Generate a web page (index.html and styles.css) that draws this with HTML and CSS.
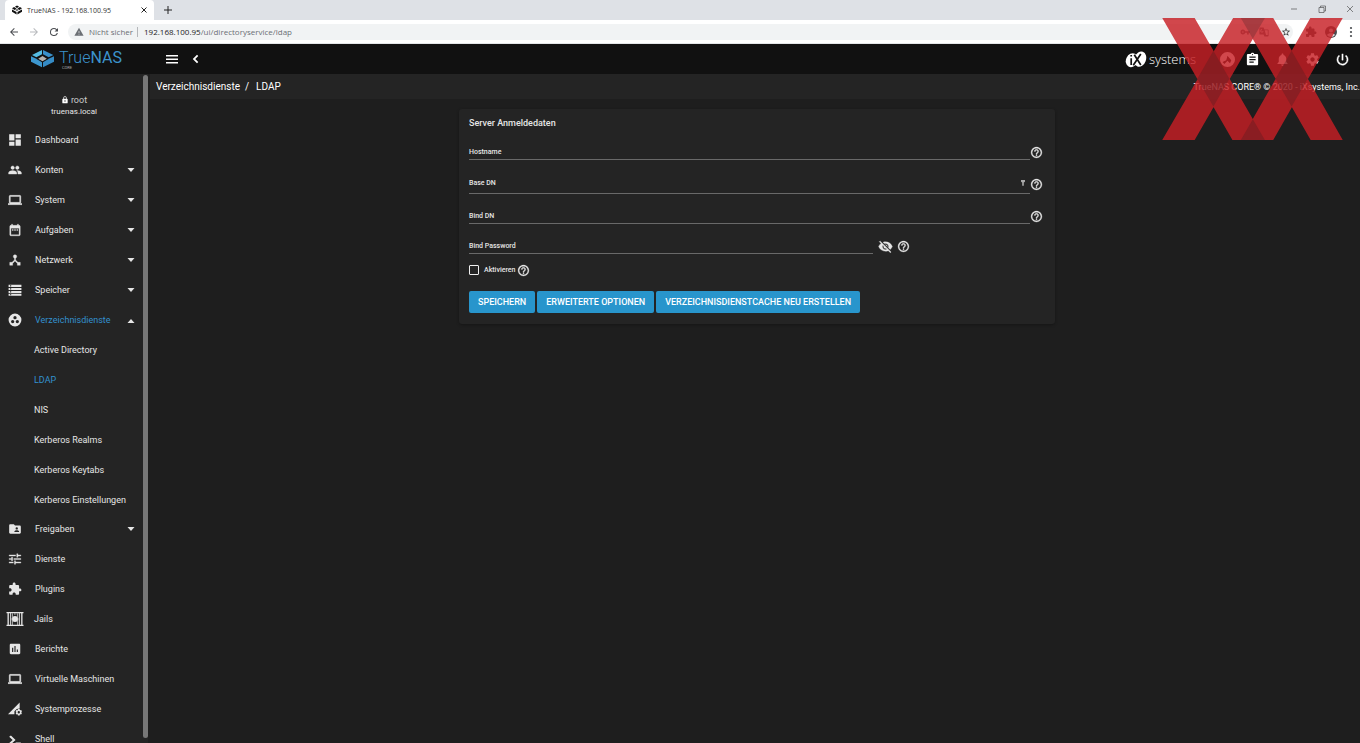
FILE: index.html
```html
<!DOCTYPE html>
<html lang="de">
<head>
    <meta charset="UTF-8">
    <meta name="viewport" content="width=device-width, initial-scale=1.0">
    <title>TrueNAS - 192.168.100.95</title>
    <link rel="stylesheet" href="styles.css">
</head>
<body>
    <svg class="sprite" aria-hidden="true">
        <symbol id="help" viewBox="0 0 24 24"><path d="M11 18h2v-2h-2v2zm1-16C6.48 2 2 6.48 2 12s4.48 10 10 10 10-4.48 10-10S17.52 2 12 2zm0 18c-4.41 0-8-3.59-8-8s3.59-8 8-8 8 3.59 8 8-3.59 8-8 8zm0-14c-2.21 0-4 1.79-4 4h2c0-1.1.9-2 2-2s2 .9 2 2c0 2-3 1.75-3 5h2c0-2.25 3-2.5 3-5 0-2.21-1.79-4-4-4z" stroke="currentColor" stroke-width=".6"/></symbol>
        <symbol id="laptop" viewBox="0 0 24 24"><path d="M20 18c1.1 0 1.99-.9 1.99-2L22 6c0-1.1-.9-2-2-2H4c-1.1 0-2 .9-2 2v10c0 1.1.9 2 2 2H0v2h24v-2h-4zM4 6h16v10H4V6z" stroke="currentColor" stroke-width=".6"/></symbol>
        <symbol id="puzzle" viewBox="0 0 24 24"><path d="M20.5 11H19V7c0-1.1-.9-2-2-2h-4V3.5C13 2.12 11.88 1 10.5 1S8 2.12 8 3.5V5H4c-1.1 0-1.99.9-1.99 2v3.8H3.5c1.49 0 2.7 1.21 2.7 2.7s-1.21 2.7-2.7 2.7H2V20c0 1.1.9 2 2 2h3.8v-1.5c0-1.49 1.21-2.7 2.7-2.7 1.49 0 2.7 1.21 2.7 2.7V22H17c1.1 0 2-.9 2-2v-4h1.5c1.38 0 2.5-1.12 2.5-2.5S21.88 11 20.5 11z"/></symbol>
        <symbol id="arrow" viewBox="0 0 10 5"><path d="M1.500 0h7L5 4z"/></symbol>
        <symbol id="gear" viewBox="0 0 24 24"><path d="M19.43 12.98c.04-.32.07-.64.07-.98s-.03-.66-.07-.98l2.11-1.65c.19-.15.24-.42.12-.64l-2-3.46c-.12-.22-.39-.3-.61-.22l-2.49 1c-.52-.4-1.08-.73-1.69-.98l-.38-2.65C14.46 2.18 14.25 2 14 2h-4c-.25 0-.46.18-.49.42l-.38 2.65c-.61.25-1.17.59-1.69.98l-2.49-1c-.23-.09-.49 0-.61.22l-2 3.46c-.13.22-.07.49.12.64l2.11 1.65c-.04.32-.07.65-.07.98s.03.66.07.98l-2.11 1.65c-.19.15-.24.42-.12.64l2 3.46c.12.22.39.3.61.22l2.49-1c.52.4 1.08.73 1.69.98l.38 2.65c.03.24.24.42.49.42h4c.25 0 .46-.18.49-.42l.38-2.65c.61-.25 1.17-.59 1.69-.98l2.49 1c.23.09.49 0 .61-.22l2-3.46c.12-.22.07-.49-.12-.64l-2.11-1.65zM12 15.5c-1.93 0-3.5-1.57-3.5-3.5s1.57-3.5 3.5-3.5 3.5 1.57 3.5 3.5-1.57 3.5-3.5 3.5z"/></symbol>
    </svg>

    <div class="tabstrip">
        <div class="tab">
            <svg class="favicon" viewBox="0 0 24 22"><path d="M12 0l5 3-5 3-5-3zM5 4l6 4-5 3-6-4zM19 4l5 3-6 4-5-3zM0 10l11 6v6L0 15zM24 10l-11 6v6l11-7zM12 9l4 2-4 2-4-2z"/></svg>
            <span class="tab-title">TrueNAS - 192.168.100.95</span>
            <button class="plain" aria-label="Tab schließen"><svg viewBox="0 0 8 8" class="line-icon tab-close"><path d="M1.500 1.500l5 5M6.500 1.500l-5 5"/></svg></button>
        </div>
        <button class="plain new-tab" aria-label="Neuer Tab"><svg viewBox="0 0 10 10" class="line-icon"><path d="M5 1v8M1 5h8"/></svg></button>
        <div class="window-buttons">
            <button class="plain" aria-label="Minimieren"><svg viewBox="0 0 8 8"><path d="M1 4h6"/></svg></button>
            <button class="plain" aria-label="Wiederherstellen"><svg viewBox="0 0 8 8"><path d="M1 2.500h5v5H1zM2.500 2.500v-1.500h5v5H6"/></svg></button>
            <button class="plain" aria-label="Schließen"><svg viewBox="0 0 8 8"><path d="M1 1l6 6M7 1l-6 6"/></svg></button>
        </div>
    </div>

    <div class="toolbar">
        <button class="plain" aria-label="Zurück"><svg viewBox="0 0 24 24"><path d="M20 11H7.830l5.590-5.590L12 4l-8 8 8 8 1.410-1.410L7.830 13H20v-2z"/></svg></button>
        <button class="plain faded" aria-label="Vorwärts"><svg viewBox="0 0 24 24"><path d="M12 4l-1.410 1.410L16.170 11H4v2h12.170l-5.580 5.590L12 20l8-8z"/></svg></button>
        <button class="plain" aria-label="Neu laden"><svg viewBox="0 0 24 24"><path d="M17.650 6.350A7.960 7.960 0 0012 4a8 8 0 107.730 10h-2.080A6 6 0 1112 6c1.660 0 3.140.690 4.220 1.780L13 11h7V4z"/></svg></button>
        <div class="address">
            <svg class="warning" viewBox="0 0 24 24"><path d="M1 21h22L12 2 1 21zm12-3h-2v-2h2v2zm0-4h-2v-4h2v4z"/></svg>
            <span class="insecure">Nicht sicher</span>
            <span class="url"><b>192.168.100.95</b>/ui/directoryservice/ldap</span>
            <svg class="addr-icon" viewBox="0 0 24 24"><path d="M12.650 10A6 6 0 001 12a6 6 0 0011.650 2H17v4h4v-4h2v-4H12.650zM7 14a2 2 0 110-4 2 2 0 010 4z"/></svg>
            <svg class="addr-icon" viewBox="0 0 24 24"><path fill-rule="evenodd" d="M2 1h9l2 5h8a2 2 0 012 2v13a2 2 0 01-2 2h-8l-2-5H3a2 2 0 01-2-2V3zm5 4a4 4 0 104 5H7v1.500h2A2.500 2.500 0 117 7zm7 4l3 10h4V8h-7z"/></svg>
            <svg class="addr-icon star" viewBox="0 0 24 24"><path d="M22 9.240l-7.190-.620L12 2 9.190 8.630 2 9.240l5.460 4.730L5.820 21 12 17.270 18.180 21l-1.630-7.030L22 9.240zM12 15.400l-3.760 2.270 1-4.280-3.320-2.880 4.380-.380L12 6.100l1.710 4.040 4.380.380-3.320 2.880 1 4.280L12 15.400z"/></svg>
        </div>
        <button class="plain" aria-label="Erweiterungen"><svg><use href="#puzzle"/></svg></button>
        <button class="plain" aria-label="Profil"><svg class="avatar" viewBox="0 0 24 24"><circle cx="12" cy="12" r="12"/><path d="M12 5a4 4 0 110 8 4 4 0 010-8zM4 18c2-5 14-5 16 0-4 5-12 5-16 0z" fill="#dee1e6"/></svg></button>
        <button class="plain" aria-label="Menü"><svg viewBox="0 0 24 24"><circle cx="12" cy="4" r="2.200"/><circle cx="12" cy="12" r="2.200"/><circle cx="12" cy="20" r="2.200"/></svg></button>
    </div>

    <header class="topbar">
        <a href="#" class="brand">
            <svg class="brand-mark" viewBox="0 0 69 54">
                <path d="M33 0v13L16 22 3 15z" fill="#55bde4"/>
                <path d="M36 0v13l17 9 14-7z" fill="#3a91cb"/>
                <path d="M0 19l13 6 20 12v15L0 35z" fill="#3d97cf"/>
                <path d="M69 19l-13 6-20 12v15l33-17z" fill="#358bc5"/>
                <path d="M34.500 18l13 8-13 8-13-8z" fill="#b6b3ae"/>
            </svg>
            <span class="brand-text">
                <span class="brand-name">True<b>NAS</b></span>
                <span class="brand-edition">CORE</span>
            </span>
        </a>
        <button class="plain menu" aria-label="Seitenleiste"><svg viewBox="0 0 12 10"><path d="M0 1h12v1.500H0zM0 4.500h12V6H0zM0 8h12v1.500H0z"/></svg></button>
        <button class="plain back" aria-label="Einklappen"><svg viewBox="0 0 24 24"><path d="M16.500 6L14 3.500 5.500 12l8.500 8.500 2.500-2.500-6-6z"/></svg></button>
        <div class="ix">
            <svg class="ix-mark" viewBox="0 0 64 48">
                <ellipse cx="20" cy="26" rx="17" ry="21" transform="rotate(25 20 26)" fill="#fff"/>
                <ellipse cx="44" cy="23" rx="17" ry="23" transform="rotate(20 44 23)" fill="#fff"/>
                <path d="M18 20v20M18 11v4M27 10l19 30M46 8L24 41" stroke="#111" stroke-width="5"/>
            </svg>
            <span>systems</span>
        </div>
        <div class="top-icons">
            <button class="plain" aria-label="TrueCommand"><svg viewBox="0 0 24 24"><path fill-rule="evenodd" d="M12 0a12 12 0 110 24 12 12 0 010-24zM4 16l6-3 2-7 6 7-2 5-4-4-5 5z"/></svg></button>
            <button class="plain" aria-label="Aufgaben"><svg viewBox="0 0 24 24"><path d="M19 3h-4.180C14.400 1.840 13.300 1 12 1s-2.400.840-2.820 2H5c-1.100 0-2 .9-2 2v14c0 1.100.9 2 2 2h14c1.100 0 2-.9 2-2V5c0-1.100-.9-2-2-2zm-7 0c.55 0 1 .45 1 1s-.45 1-1 1-1-.45-1-1 .45-1 1-1zm2 14H7v-2h7v2zm3-4H7v-2h10v2zm0-4H7V7h10v2z"/></svg></button>
            <button class="plain" aria-label="Benachrichtigungen"><svg viewBox="0 0 24 24"><path d="M12 22c1.100 0 2-.9 2-2h-4c0 1.100.890 2 2 2zm6-6v-5c0-3.070-1.640-5.640-4.500-6.320V4c0-.83-.67-1.500-1.500-1.500s-1.500.67-1.500 1.500v.68C7.630 5.360 6 7.920 6 11v5l-2 2v1h16v-1l-2-2z"/></svg></button>
            <button class="plain" aria-label="Einstellungen"><svg><use href="#gear"/></svg></button>
            <button class="plain" aria-label="Ausschalten"><svg viewBox="0 0 24 24"><path d="M13 3h-2v10h2V3zm4.830 2.170l-1.420 1.420A6.920 6.920 0 0119 12a7 7 0 11-11.420-5.420L6.170 5.170A8.930 8.930 0 003 12a9 9 0 1014.830-6.830z" stroke="#fff" stroke-width=".6"/></svg></button>
        </div>
    </header>

    <div class="layout">
        <aside class="sidebar">
            <div class="sidebar-inner">
                <div class="user">
                    <div class="user-name"><svg viewBox="0 0 24 24"><path d="M18 8h-1V6A5 5 0 007 6v2H6c-1.100 0-2 .9-2 2v10c0 1.100.9 2 2 2h12c1.100 0 2-.9 2-2V10c0-1.100-.9-2-2-2zm-6 9a2 2 0 110-4 2 2 0 010 4zm3.100-9H8.900V6a3.100 3.100 0 016.200 0v2z"/></svg>root</div>
                    <div class="user-host">truenas.local</div>
                </div>
                <nav>
                    <ul class="nav">
                        <li><a href="#"><svg viewBox="0 0 24 24"><path d="M2 13h9V2H2v11zm0 9h9v-7H2v7zm11 0h9V11h-9v11zm0-20v7h9V2h-9z"/></svg><span>Dashboard</span></a></li>
                        <li><a href="#"><svg viewBox="0 0 24 24"><path d="M16 11c1.660 0 2.990-1.340 2.990-3S17.660 5 16 5s-3 1.340-3 3 1.340 3 3 3zm-8 0c1.660 0 2.990-1.340 2.990-3S9.660 5 8 5 5 6.340 5 8s1.340 3 3 3zm0 2c-2.330 0-7 1.170-7 3.500V19h14v-2.500C15 14.170 10.330 13 8 13zm8 0c-.29 0-.62.02-.97.05 1.160.84 1.970 1.970 1.970 3.450V19h6v-2.500c0-2.330-4.670-3.500-7-3.500z" stroke="currentColor" stroke-width=".6"/></svg><span>Konten</span><svg class="arrow"><use href="#arrow"/></svg></a></li>
                        <li><a href="#"><svg><use href="#laptop"/></svg><span>System</span><svg class="arrow"><use href="#arrow"/></svg></a></li>
                        <li><a href="#"><svg viewBox="0 0 24 24"><path d="M9 11H7v2h2v-2zm4 0h-2v2h2v-2zm4 0h-2v2h2v-2zm2-7h-1V2h-2v2H8V2H6v2H5c-1.100 0-2 .9-2 2v14c0 1.100.9 2 2 2h14c1.100 0 2-.9 2-2V6c0-1.100-.9-2-2-2zm0 16H5V9h14v11z" stroke="currentColor" stroke-width=".5"/></svg><span>Aufgaben</span><svg class="arrow"><use href="#arrow"/></svg></a></li>
                        <li><a href="#"><svg viewBox="0 0 24 24"><path d="M17 16l-4-4V8.820C14.160 8.400 15 7.300 15 6a3 3 0 10-4 2.820V12l-4 4H3v5h5v-3.050l4-4.200 4 4.200V21h5v-5h-4z" stroke="currentColor" stroke-width=".6"/></svg><span>Netzwerk</span><svg class="arrow"><use href="#arrow"/></svg></a></li>
                        <li><a href="#"><svg viewBox="0 0 24 24"><path d="M1 3h22v4H1zM1 8.500h22v3.500H1zM1 13.500h22V17H1zM1 18.500h22V22H1z"/><path d="M3.500 4h2v2h-2zM3.500 9.200h2v2h-2zM3.500 14.200h2v2h-2zM3.500 19.200h2v2h-2z" fill="#242424"/></svg><span>Speicher</span><svg class="arrow"><use href="#arrow"/></svg></a></li>
                        <li class="active"><a href="#"><svg viewBox="0 0 24 24"><path d="M12 1a11 11 0 100 22 11 11 0 000-22zM8 17.500a2.800 2.800 0 110-5.600 2.800 2.800 0 010 5.600zM9.200 8a2.800 2.800 0 115.600 0 2.800 2.800 0 01-5.600 0zM16 17.500a2.800 2.800 0 110-5.600 2.800 2.800 0 010 5.600z"/></svg><span>Verzeichnisdienste</span><svg class="arrow up"><use href="#arrow"/></svg></a>
                            <ul class="subnav">
                                <li><a href="#">Active Directory</a></li>
                                <li><a href="#" class="current">LDAP</a></li>
                                <li><a href="#">NIS</a></li>
                                <li><a href="#">Kerberos Realms</a></li>
                                <li><a href="#">Kerberos Keytabs</a></li>
                                <li><a href="#">Kerberos Einstellungen</a></li>
                            </ul>
                        </li>
                        <li><a href="#"><svg viewBox="0 0 24 24"><path d="M20 6h-8l-2-2H4c-1.100 0-1.990.9-1.990 2L2 18c0 1.100.9 2 2 2h16c1.100 0 2-.9 2-2V8c0-1.100-.9-2-2-2zm-5 3a2 2 0 110 4 2 2 0 010-4zm4 8h-8v-1c0-1.330 2.670-2 4-2s4 .67 4 2v1z"/></svg><span>Freigaben</span><svg class="arrow"><use href="#arrow"/></svg></a></li>
                        <li><a href="#"><svg viewBox="0 0 24 24"><path d="M2 17v2h7v-2H2zM2 5v2h11V5H2zm11 16v-2h9v-2h-9v-2h-2v6h2zM6 9v2H2v2h4v2h2V9H6zm16 4v-2H10v2h12zm-7-4h2V7h5V5h-5V3h-2v6z" stroke="currentColor" stroke-width=".6"/></svg><span>Dienste</span></a></li>
                        <li><a href="#"><svg><use href="#puzzle"/></svg><span>Plugins</span></a></li>
                        <li class="jails"><a href="#"><svg viewBox="0 0 51 42"><path d="M0 0h51v4H0zM0 38h51v4H0zM3 4h4v34H3zM11 4h3v34h-3zM37 4h3v34h-3zM44 4h4v34h-4z"/><circle cx="25.500" cy="21" r="9"/><path d="M18 4v12M33 4v12M18 27v12M33 27v12M24 4v4M28 4v4M18 16l-2 5 2 6M33 16l2 5-2 6" stroke="#ddd" stroke-width="2" fill="none"/></svg><span>Jails</span></a></li>
                        <li><a href="#"><svg viewBox="0 0 24 24"><path d="M19 3H5c-1.100 0-2 .9-2 2v14c0 1.100.9 2 2 2h14c1.100 0 2-.9 2-2V5c0-1.100-.9-2-2-2zM9 17H7v-7h2v7zm4 0h-2V7h2v10zm4 0h-2v-4h2v4z"/></svg><span>Berichte</span></a></li>
                        <li><a href="#"><svg><use href="#laptop"/></svg><span>Virtuelle Maschinen</span></a></li>
                        <li><a href="#"><svg viewBox="0 0 24 24"><path d="M0 21L20 1v10l-5 1-4 4v5z"/><path fill-rule="evenodd" d="M17 12h3l.5 2 2-.5 1.500 2.500-1.500 1.500 1.500 1.500-1.500 2.500-2-.5-.5 2h-3l-.5-2-2 .5L13 19l1.500-1.500L13 16l1.500-2.500 2 .5zm1.500 3.500a2 2 0 100 4 2 2 0 000-4z"/></svg><span>Systemprozesse</span></a></li>
                        <li><a href="#"><svg viewBox="0 0 24 24"><path d="M2 8l3-2 8 7.500L5 21l-3-2 6-5.500zM13 18h9v3h-9z"/></svg><span>Shell</span></a></li>
                    </ul>
                </nav>
            </div>
            <div class="scroll-thumb"></div>
        </aside>

        <main class="main">
            <div class="crumbs">
                <a href="#">Verzeichnisdienste</a><span class="slash">/</span><a href="#">LDAP</a>
                <span class="copyright">TrueNAS CORE® © 2020 - iXsystems, Inc.</span>
            </div>

            <div class="content">
                <form class="card">
                    <h1>Server Anmeldedaten</h1>
                    <div class="row">
                        <div class="field"><label for="hostname">Hostname</label><input type="text" id="hostname"></div>
                        <svg class="help"><use href="#help"/></svg>
                    </div>
                    <div class="row tall">
                        <div class="field"><label for="basedn">Base DN</label><input type="text" id="basedn">
                            <svg class="key" viewBox="0 0 5 8"><path d="M0 1h5v2L3.500 4v4h-2V4L0 3z"/></svg></div>
                        <svg class="help"><use href="#help"/></svg>
                    </div>
                    <div class="row">
                        <div class="field"><label for="binddn">Bind DN</label><input type="text" id="binddn"></div>
                        <svg class="help"><use href="#help"/></svg>
                    </div>
                    <div class="row password">
                        <div class="field"><label for="bindpw">Bind Password</label><input type="password" id="bindpw"></div>
                        <button type="button" class="plain eye" aria-label="Passwort anzeigen"><svg viewBox="0 0 24 24"><path d="M12 7a5 5 0 014.640 6.830l2.920 2.920A11.820 11.820 0 0022.990 12C21.260 7.610 17 4.500 12 4.500c-1.400 0-2.740.25-3.980.7l2.160 2.160C10.740 7.130 11.350 7 12 7zM2 4.270l2.280 2.280.46.46A11.800 11.800 0 001 12c1.730 4.390 6 7.500 11 7.500 1.550 0 3.030-.3 4.380-.84l.42.42L19.730 22 21 20.730 3.270 3 2 4.270zM7.530 9.800l1.550 1.550c-.05.21-.08.43-.08.65a3 3 0 003 3c.22 0 .44-.03.65-.08l1.550 1.550A5 5 0 017 12c0-.79.2-1.530.53-2.200zm4.310-.78l3.150 3.150.02-.16a3 3 0 00-3-3l-.17.01z" stroke="currentColor" stroke-width=".5"/></svg></button>
                        <svg class="help"><use href="#help"/></svg>
                    </div>
                    <div class="check">
                        <input type="checkbox" id="enable"><label for="enable">Aktivieren</label>
                        <svg class="help"><use href="#help"/></svg>
                    </div>
                    <div class="actions">
                        <button type="button">SPEICHERN</button>
                        <button type="button">ERWEITERTE OPTIONEN</button>
                        <button type="button">VERZEICHNISDIENSTCACHE NEU ERSTELLEN</button>
                    </div>
                </form>
            </div>
        </main>
    </div>

    <!-- double X badge over the top right corner -->
    <svg class="badge" viewBox="0 0 540 365" aria-hidden="true">
        <g fill="#c71e24" opacity=".82">
            <path d="M0 0h97l210 365h-97zM212 0h95L97 365H0zM235 0h97l208 365h-96zM443 0h97L332 365h-97z"/>
        </g>
        <path d="M153 98l48 84-48 83-48-83zM387 98l48 84-48 83-48-83zM235 0h72l-36 62zM235 365h72l-36-62z" fill="#301a20" opacity=".25"/>
    </svg>
</body>
</html>
```
FILE: styles.css
```css
* {
    box-sizing: border-box;
}

body {
    display: flex;
    flex-direction: column;
    height: 100vh;
    margin: 0;
    overflow: hidden;
    background-color: #1e1e1e;
    color: #e6e6e6;
    font-family: Roboto, sans-serif;
    font-size: 9px;
}

a {
    color: inherit;
    text-decoration: none;
}

ul {
    list-style: none;
    margin: 0;
    padding: 0;
}

svg {
    display: block;
    flex: none;
    fill: currentColor;
}

.sprite {
    display: none;
}

.plain {
    display: flex;
    padding: 0;
    border: none;
    background: none;
    color: inherit;
    cursor: pointer;
}

/* browser frame */
.tabstrip {
    display: flex;
    flex: none;
    align-items: center;
    height: 20px;
    padding-left: 5px;
    background-color: #dee1e6;
    color: #333;
    font-family: "Open Sans", sans-serif;
    font-size: 7px;
}

.tab {
    display: flex;
    align-items: center;
    width: 149px;
    height: 20px;
    padding: 0 6px 0 7px;
    border-radius: 4px 4px 0 0;
    background-color: #fff;
}

.favicon {
    width: 10px;
    height: 10px;
    margin-right: 5px;
    fill: #111;
}

.tab-title {
    flex: 1;
    white-space: nowrap;
}

.line-icon {
    width: 10px;
    height: 10px;
    stroke: #222;
    stroke-width: 1;
}

.tab-close {
    width: 8px;
    height: 8px;
}

.new-tab {
    margin-left: 9px;
}

.window-buttons {
    display: flex;
    gap: 20px;
    margin: 0 6px 3px auto;
}

.window-buttons svg {
    width: 8px;
    height: 8px;
    fill: none;
    stroke: #555;
    stroke-width: 0.7;
}

.toolbar {
    display: flex;
    flex: none;
    align-items: center;
    gap: 8px;
    height: 24px;
    padding: 0 3px 0 8px;
    border-bottom: 1px solid #e4e6e8;
    background-color: #fff;
    color: #4a4d51;
    font-family: "Open Sans", sans-serif;
    font-size: 8px;
}

.toolbar svg {
    width: 12px;
    height: 12px;
}

.faded {
    color: #b8babd;
}

.address {
    display: flex;
    flex: 1;
    align-items: center;
    height: 16px;
    margin-right: 4px;
    padding: 0 2px 0 6px;
    border-radius: 8px;
    background-color: #f1f3f4;
    color: #6b6f74;
}

.toolbar .address svg {
    width: 10px;
    height: 10px;
}

.insecure {
    margin-left: 5px;
    padding-right: 4px;
    border-right: 1px solid #b5b7ba;
    line-height: 10px;
}

.url {
    flex: 1;
    margin-left: 6px;
}

.url b {
    color: #222;
    font-weight: 400;
}

.address .addr-icon {
    margin-left: 9px;
}

.address .star {
    margin-left: 12px;
    color: #333;
}

/* app header */
.topbar {
    display: flex;
    flex: none;
    align-items: center;
    height: 30px;
    padding: 0 10px 0 31px;
    background-color: #111;
    color: #fff;
}

.brand {
    display: flex;
    align-items: center;
    width: 135px;
    color: #3c93cc;
}

.brand-mark {
    width: 23px;
    height: 18px;
}

.brand-text {
    display: flex;
    flex-direction: column;
    margin: 2px 0 0 5px;
}

.brand-name {
    font-size: 16px;
    font-weight: 300;
    line-height: 16px;
}

.brand-name b {
    font-weight: 400;
}

.brand-edition {
    margin-left: 3px;
    color: #aaa;
    font-size: 4px;
    line-height: 4px;
}

.menu svg {
    width: 12px;
    height: 10px;
}

.back {
    margin-left: 12px;
}

.back svg {
    width: 12px;
    height: 12px;
}

.ix {
    display: flex;
    align-items: center;
    gap: 2px;
    margin-left: auto;
    font-family: "Open Sans", sans-serif;
    font-size: 13px;
    font-weight: 300;
}

.ix-mark {
    width: 22px;
    height: 17px;
}

.top-icons {
    display: flex;
    align-items: center;
    gap: 15px;
    margin-left: 24px;
}

.top-icons svg {
    width: 15px;
    height: 15px;
}

.top-icons button:first-child {
    margin-right: -5px;
}

.layout {
    display: flex;
    flex: 1;
    min-height: 0;
}

.sidebar {
    display: flex;
    flex: none;
    width: 148px;
    background-color: #242424;
}

.sidebar-inner {
    flex: 1;
    overflow: hidden;
}

.scroll-thumb {
    width: 5px;
    margin: 1px 0 5px;
    border-radius: 3px;
    background-color: #777;
}

.user {
    padding: 20px 0 7px;
    margin-left: 5px;
    text-align: center;
}

.user-name {
    display: flex;
    align-items: center;
    justify-content: center;
    gap: 2px;
    color: #ccc;
    line-height: 12px;
}

.user-name svg {
    width: 8px;
    height: 8px;
    color: #fff;
}

.user-host {
    font-size: 8px;
    line-height: 12px;
}

.nav a {
    display: flex;
    align-items: center;
    height: 30px;
    padding: 0 7px 0 8px;
    line-height: 8px;
    white-space: nowrap;
}

.nav a > svg {
    width: 14px;
    height: 14px;
}

.nav span {
    flex: 1;
    margin-left: 13px;
}

.nav a > .arrow {
    width: 10px;
    height: 5px;
}

.nav .up {
    transform: rotate(180deg);
}

.subnav {
    margin-bottom: -1px;
}

.nav .subnav a {
    padding-left: 34px;
}

.nav .active span,
.nav .current {
    color: #3391ce;
}

.nav .jails a {
    padding-left: 6px;
}

.nav .jails svg {
    width: 18px;
}

.nav .jails span {
    margin-left: 10px;
}

.main {
    flex: 1;
    min-width: 0;
    padding-left: 2px;
}

.crumbs {
    display: flex;
    align-items: center;
    height: 25px;
    padding-left: 6px;
    background-color: #242424;
    color: #fff;
    font-size: 10px;
    white-space: nowrap;
}

.slash {
    margin: 0 7px 0 5px;
}

.copyright {
    margin-left: auto;
    font-size: 9px;
}

.content {
    padding: 10px 0 0 4px;
}

/* form */
.card {
    width: calc(50% - 7px);
    margin: 0 auto;
    padding: 8px 10px 11px;
    border-radius: 3px;
    background-color: #242424;
    box-shadow: 0 1px 3px rgba(0, 0, 0, 0.3);
}

.card h1 {
    margin: 0 0 13px;
    font-size: 9px;
    font-weight: 500;
    line-height: 12px;
}

.row {
    display: flex;
    align-items: center;
    height: 18px;
    margin-bottom: 12px;
    padding-right: 2px;
}

.tall {
    height: 22px;
}

.field {
    display: grid;
    flex: 1;
    align-self: stretch;
    align-items: center;
    border-bottom: 1px solid #696969;
}

.field label,
.field input,
.field .key {
    grid-area: 1 / 1;
}

.field label {
    padding-top: 2px;
    font-size: 7px;
    font-weight: 500;
    line-height: 10px;
    pointer-events: none;
}

.tall .field label {
    padding: 0;
}

.field input {
    width: 100%;
    height: 16px;
    padding: 0;
    border: none;
    outline: none;
    background: none;
    color: inherit;
    font: inherit;
}

.key {
    justify-self: end;
    width: 4px;
    height: 7px;
    margin-right: 5px;
    color: #aaa;
}

.help {
    width: 13px;
    height: 13px;
}

.row .help,
.eye {
    margin-top: 3px;
}

.password .field {
    flex: 0 0 404px;
}

.eye {
    margin-left: 5px;
    margin-right: 4px;
}

.eye svg {
    width: 15px;
    height: 15px;
}

.check {
    display: flex;
    align-items: center;
    height: 14px;
    margin-top: -3px;
    font-size: 7px;
    font-weight: 500;
}

.check input {
    appearance: none;
    width: 10px;
    height: 10px;
    margin: 0 5px 0 0;
    border: 1px solid #eee;
    border-radius: 1px;
}

.check .help {
    margin-left: 2px;
}

.actions {
    display: flex;
    gap: 2px;
    margin-top: 14px;
}

.actions button {
    height: 22px;
    padding: 0 9px;
    border: none;
    border-radius: 2px;
    background-color: #2895cc;
    color: #fff;
    font-family: inherit;
    font-size: 9px;
    font-weight: 500;
    white-space: nowrap;
    cursor: pointer;
}

.badge {
    position: absolute;
    top: 18px;
    right: 17px;
    width: 181px;
    height: 122px;
    pointer-events: none;
}
```
